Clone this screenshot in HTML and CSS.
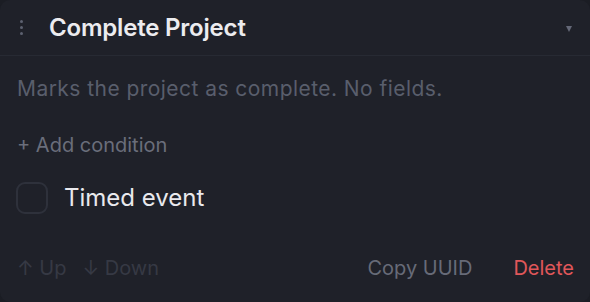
FILE: index.html
```html
<!DOCTYPE html>
<html>
<head>
<meta charset="utf-8">
<link rel="stylesheet" href="styles.css">
</head>
<body>
<div class="card">
  <div class="header">
    <span class="handle"><i></i><i></i><i></i></span>
    <span class="title">Complete Project</span>
    <span class="caret"></span>
  </div>
  <div class="body">
    <p class="desc">Marks the project as complete. No fields.</p>
    <div class="add">+ Add condition</div>
    <label class="check"><span class="box"></span><span class="check-label">Timed event</span></label>
  </div>
  <div class="footer">
    <div class="moves">
      <span class="move">↑ Up</span>
      <span class="move">↓ Down</span>
    </div>
    <div class="actions">
      <span class="copy">Copy UUID</span>
      <span class="delete">Delete</span>
    </div>
  </div>
</div>
</body>
</html>
```
FILE: styles.css
```css
* { box-sizing: border-box; }
html, body { margin: 0; padding: 0; background: #1b1d24; }
body { font-family: Inter, "Noto Sans", sans-serif; width: 590px; height: 302px; }
.card {
  width: 590px; height: 302px;
  background: #1f2129;
  border-radius: 10px;
  display: flex; flex-direction: column;
}
.header {
  height: 56px;
  border-bottom: 1px solid #272a33;
  display: flex; align-items: center;
  padding: 0 18px 0 18px;
}
.handle { display: flex; flex-direction: column; gap: 3px; width: 6px; margin-right: 25px; align-items: center; }
.handle i { display: block; width: 3px; height: 3px; border-radius: 50%; background: #5d6170; }
.title { color: #ececef; font-size: 24px; font-weight: 600; flex: 1; letter-spacing: -0.2px; }
.caret { width: 0; height: 0; border-left: 3.5px solid transparent; border-right: 3.5px solid transparent; border-top: 6px solid #646877; margin-top: 2px; }
.body { padding: 21px 17px 0; flex: 1; }
.desc { margin: 0; color: #595e6c; font-size: 21px; line-height: 24px; letter-spacing: 0.45px; white-space: nowrap; }
.add { margin-top: 32px; color: #6a6e7b; font-size: 20px; line-height: 24px; }
.check { display: flex; align-items: center; margin-top: 25px; margin-left: -1px; }
.box { width: 32px; height: 32px; border: 2px solid #2e313b; border-radius: 9px; margin-right: 16px; }
.check-label { color: #e9e9ed; font-size: 24px; line-height: 32px; }
.footer { display: flex; justify-content: space-between; align-items: center; padding: 0 16px 22px 17px; font-size: 20px; line-height: 24px; }
.moves { display: flex; gap: 16px; color: #363944; }
.actions { display: flex; gap: 41px; }
.copy { color: #676b78; }
.delete { color: #e0575a; }
```
